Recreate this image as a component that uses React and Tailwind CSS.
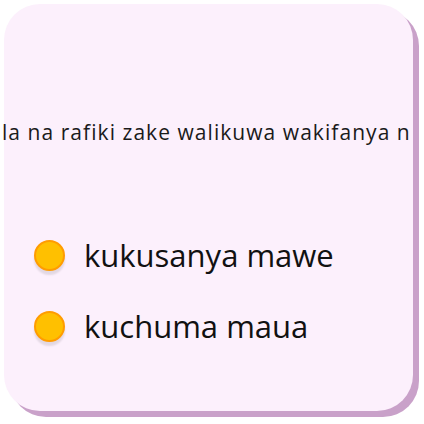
export default function App() {
  const options = ["kukusanya mawe", "kuchuma maua"];

  return (
    <div className="h-[424px] w-[424px] overflow-hidden bg-white p-[4px]">
      <div
        className="flex h-[407px] w-[409px] flex-col rounded-[36px] bg-[#fcf0fc] shadow-[6px_6px_0_#c9a1c9]"
        style={{ fontFamily: "'Open Sans', 'DejaVu Sans', sans-serif" }}
      >
        <div className="mt-[112px] -ml-[2px] w-[409px] overflow-hidden whitespace-nowrap text-[21px] leading-[32px] tracking-[1.05px] text-[#1a1a1a]">
          la na rafiki zake walikuwa wakifanya nini?
        </div>

        <div className="mt-[87px] flex flex-col gap-[31px] pl-[30px]">
          {options.map((o) => (
            <div key={o} className="flex items-center gap-[19px]">
              <span className="h-[31px] w-[31px] rounded-full border-2 border-[#ff9c00] bg-[#ffc000] shadow-[0_4px_2px_rgba(0,0,0,0.1)]" />
              <span className="text-[31px] leading-[40px] text-[#111]">{o}</span>
            </div>
          ))}
        </div>
      </div>
    </div>
  );
}
